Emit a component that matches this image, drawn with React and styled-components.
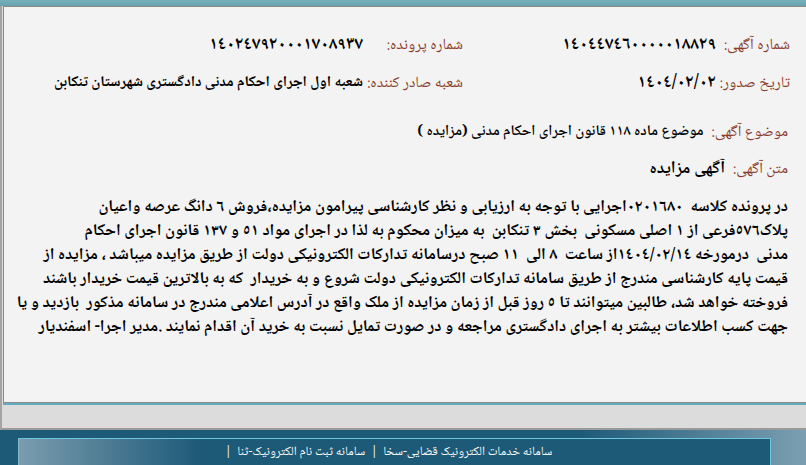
import styled, { createGlobalStyle } from "styled-components";

const GlobalStyle = createGlobalStyle`
  html, body {
    margin: 0;
    padding: 0;
    background: #dcdcdc;
  }
  body {
    font-family: "Noto Naskh Arabic", "Noto Sans Arabic", "DejaVu Sans", sans-serif;
    overflow: hidden;
  }
`;

const fields = [
  { label: "شماره آگهی:", value: "١٤٠٤٤٧٤٦٠٠٠٠٠١٨٨٢٩", numeric: true },
  { label: "شماره پرونده:", value: "١٤٠٢٤٧٩٢٠٠٠١٧٠٨٩٣٧", numeric: true },
  { label: "تاریخ صدور:", value: "١٤٠٤/٠٢/٠٢", numeric: true },
  {
    label: "شعبه صادر کننده:",
    value: "شعبه اول اجرای احکام مدنی دادگستری شهرستان تنکابن",
  },
];

const bodyLines = [
  "در پرونده کلاسه  ٠٢٠١٦٨٠اجرایی با توجه به ارزیابی و نظر کارشناسی پیرامون مزایده،فروش ٦ دانگ عرصه واعیان",
  "پلاک٥٧٦فرعی از ١ اصلی مسکونی  بخش ٣ تنکابن  به میزان محکوم به لذا در اجرای مواد ٥١ و ١٣٧ قانون اجرای احکام",
  "مدنی  درمورخه ١٤٠٤/٠٢/١٤از ساعت  ٨ الی  ١١ صبح درسامانه تدارکات الکترونیکی دولت از طریق مزایده میباشد ، مزایده از",
  "قیمت پایه کارشناسی مندرج از طریق سامانه تدارکات الکترونیکی دولت شروع و به خریدار  که به بالاترین قیمت خریدار باشند",
  "فروخته خواهد شد، طالبین میتوانند تا ٥ روز قبل از زمان مزایده از ملک واقع در آدرس اعلامی مندرج در سامانه مذکور  بازدید و یا",
  "جهت کسب اطلاعات بیشتر به اجرای دادگستری مراجعه و در صورت تمایل نسبت به خرید آن اقدام نمایند .مدیر اجرا- اسفندیار",
];

export default function App() {
  return (
    <>
      <GlobalStyle />
      <Page>
        <TopBar />
        <Frame>
          <Panel>
            <InfoGrid>
              {fields.map((f) => (
                <Field key={f.label}>
                  <Label>{f.label}</Label>
                  <Value $numeric={f.numeric}>{f.value}</Value>
                </Field>
              ))}
            </InfoGrid>
            <Line $top={15}>
              <Label>موضوع آگهی:</Label>
              <Subject>موضوع ماده ١١٨ قانون اجرای احکام مدنی (مزایده )</Subject>
            </Line>
            <Line $top={7}>
              <Label>متن آگهی:</Label>
              <Title>آگهی مزایده</Title>
            </Line>
            <Body>
              {bodyLines.map((l, i) => (
                <BodyLine key={i}>{l}</BodyLine>
              ))}
            </Body>
          </Panel>
        </Frame>
        <Footer>
          <FooterBox>
            <FooterText>
              سامانه خدمات الکترونیک قضایی-سخا&nbsp;&nbsp;|&nbsp;&nbsp;سامانه ثبت نام الکترونیک-ثنا&nbsp;&nbsp;|
            </FooterText>
          </FooterBox>
        </Footer>
      </Page>
    </>
  );
}

const Page = styled.div`
  height: 465px;
  display: flex;
  flex-direction: column;
  direction: rtl;
`;

const TopBar = styled.div`
  height: 6px;
  background: linear-gradient(to bottom, #76b0bb, #66a2ad);
`;

const Frame = styled.div`
  height: 424px;
  box-sizing: border-box;
  background: #dcdcdc;
  border-left: 2px solid #a4a4a4;
  border-bottom: 2px solid #9a9a9a;
  padding-left: 1px;
  direction: ltr;
`;

const Panel = styled.div`
  height: 397px;
  box-sizing: border-box;
  background: #f3f3f3;
  border: 1px solid #8a8a8a;
  border-right: none;
  box-shadow: 0 2px 0 #62aebe;
  direction: rtl;
  padding-top: 19px;
  color: #000;
`;

const InfoGrid = styled.div`
  display: grid;
  grid-template-columns: 74px 253px 100px 1fr;
  grid-auto-rows: 38px;
  padding-right: 16px;
`;

const Field = styled.div`
  display: contents;
`;

const Label = styled.span`
  color: #8b3d2b;
  font-size: 15.5px;
  white-space: nowrap;
  display: flex;
  align-items: center;
  margin-left: 8px;
`;

const Value = styled.span`
  font-size: ${(p) => (p.$numeric ? "17.5px" : "15px")};
  font-weight: bold;
  white-space: nowrap;
  display: flex;
  align-items: center;
`;

const Line = styled.div`
  display: flex;
  align-items: center;
  height: 30px;
  margin-top: ${(p) => p.$top}px;
  padding-right: 18px;
`;

const Subject = styled.span`
  font-size: 15px;
  font-weight: 600;
  white-space: nowrap;
`;

const Title = styled.span`
  font-size: 17px;
  font-weight: bold;
  white-space: nowrap;
`;

const Body = styled.div`
  margin: 11px 18px 0 0;
  display: flex;
  flex-direction: column;
`;

const BodyLine = styled.div`
  height: 24px;
  line-height: 24px;
  font-size: 16.5px;
  font-weight: bold;
  white-space: pre;
`;

const Footer = styled.div`
  flex: 1;
  display: flex;
  flex-direction: column;
  padding: 8px 35px 0 18px;
  background: linear-gradient(to right, #1d5a78 0%, #1d5a78 72%, #7b9fb1 100%);
  direction: ltr;
`;

const FooterBox = styled.div`
  flex: 1;
  display: flex;
  justify-content: center;
  align-items: center;
  border-top: 1px solid #6ec6dc;
  border-left: 1px solid #8cb6cc;
  border-right: 1px solid #6ec6dc;
  background: linear-gradient(to right, #7b9cae 0%, #1d5a78 24%, #1d5a78 100%);
`;

const FooterText = styled.span`
  direction: rtl;
  color: #fff;
  font-size: 12.5px;
  margin-right: 12px;
`;
